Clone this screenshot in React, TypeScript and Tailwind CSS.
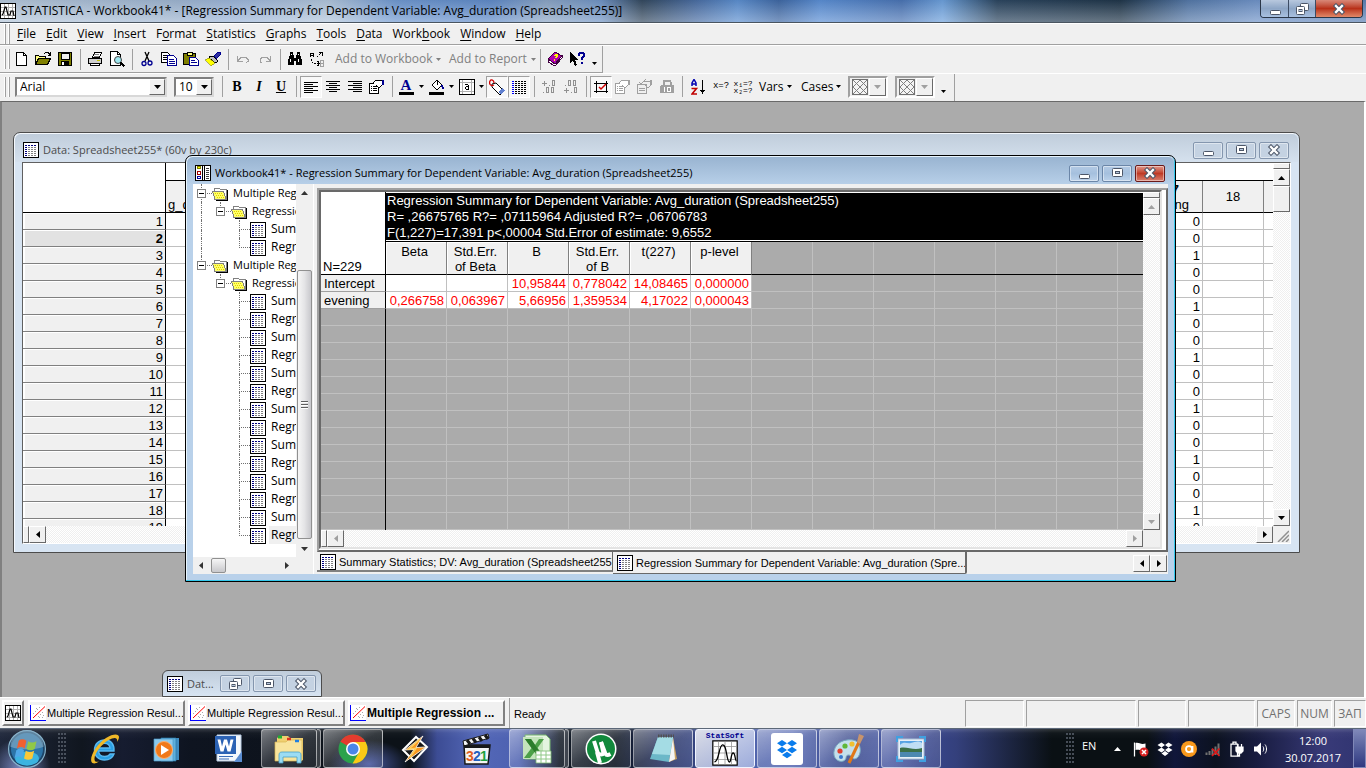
import React from "react";

type Kids = { children?: React.ReactNode };

/* ---------- small shared pieces ---------- */

const uiFont = "font-['Open_Sans','Noto_Sans',sans-serif]";
const cellFont = "font-['Liberation_Sans',Arial,sans-serif]";

function Px({ w = 16, h = 16, children }: Kids & { w?: number; h?: number }) {
  return (
    <svg width={w} height={h} viewBox={`0 0 ${w} ${h}`} fill="none" shapeRendering="crispEdges" className="block shrink-0" aria-hidden="true">
      {children}
    </svg>
  );
}

function SheetIcon() {
  return (
    <Px>
      <rect x="0.5" y="0.5" width="15" height="15" fill="#fff" stroke="#000" />
      <path d="M2 3.5h2M5 3.5h2M8 3.5h2M11 3.5h2M2 5.5h2M2 7.5h2M2 9.5h2M2 11.5h2M2 13.5h2" stroke="#00007f" />
      <path d="M5 5.5h2M8 5.5h2M11 5.5h2M5 7.5h2M8 7.5h2M11 7.5h2M5 9.5h2M8 9.5h2M11 9.5h2M5 11.5h2M8 11.5h2M11 11.5h2M5 13.5h2M8 13.5h2M11 13.5h2" stroke="#808080" />
    </Px>
  );
}

function FolderIcon() {
  return (
    <Px>
      <path d="M2 5V3l1-1h4l1 1h6v10h-1" fill="#fff" stroke="#808080" />
      <path d="M0.5 5.5h11l2.5 8H3z" fill="#ffff66" stroke="#808080" />
      <path d="M3 7h1M5 7h1M7 7h1M9 7h1M4 9h1M6 9h1M8 9h1M10 9h1M5 11h1M7 11h1M9 11h1M11 11h1" stroke="#e0d000" />
      <path d="M15 4v10.5H4" stroke="#000" />
    </Px>
  );
}

function WorkbookIcon() {
  return (
    <Px>
      <rect x="0.5" y="0.5" width="15" height="15" fill="#fff" stroke="#000" />
      <path d="M2 1.500h3v2h-3z" fill="#ffff00" stroke="#808000" />
      <path d="M2.500 6.500h3v3h-3z" stroke="#a00000" />
      <path d="M2.500 11.500h3v2h-3z" stroke="#0000a0" />
      <path d="M7.500 0v16M9.500 0v16" stroke="#000" />
      <path d="M11 3.500h3M11 5.500h3M11 7.500h3M11 9.500h3M11 11.500h3M11 13.500h3" stroke="#404040" />
    </Px>
  );
}

function AppIcon() {
  return (
    <Px>
      <rect x="0.5" y="0.5" width="15" height="15" fill="#fff" stroke="#000" />
      <path d="M4.500 1v14M8.500 1v14M12.500 1v14M1 4.500h14M1 8.500h14M1 12.500h14" stroke="#b0b0b0" />
      <path d="M2 12l1-1 2-7h1l2 8h2l1-4h2l1 5" stroke="#000" shapeRendering="auto" strokeWidth="1.2" />
    </Px>
  );
}

function PlotIcon() {
  return (
    <Px>
      <rect width="16" height="16" fill="#fff" />
      <path d="M0.500 0v15.500H16" stroke="#0000ff" />
      <path d="M3 8h1M5 6h1M7 4h1M9 2h1M4 11h1M8 11h1M10 9h1M12 7h1M6 3h1M13 10h1M9 12h1M12 12h1" stroke="#a8a8a8" />
      <path d="M3 13L15 1.500" stroke="#ff0000" shapeRendering="auto" />
    </Px>
  );
}

const arrows = {
  up: "M0 4h7L3.500 0z",
  down: "M0 0h7L3.500 4z",
};
function Tri({ dir, c = "#000" }: { dir: "up" | "down" | "left" | "right"; c?: string }) {
  if (dir === "up" || dir === "down")
    return (
      <svg width="7" height="4" viewBox="0 0 7 4" className="block shrink-0" aria-hidden="true"><path d={arrows[dir]} fill={c} /></svg>
    );
  return (
    <svg width="4" height="7" viewBox="0 0 4 7" className="block shrink-0" aria-hidden="true"><path d={dir === "left" ? "M4 0v7L0 3.500z" : "M0 0v7L4 3.500z"} fill={c} /></svg>
  );
}
function Caret({ c = "#000" }: { c?: string }) {
  return (
    <svg width="5" height="3" viewBox="0 0 5 3" className="block shrink-0" aria-hidden="true"><path d="M0 0h5L2.500 3z" fill={c} /></svg>
  );
}

const raised = "border border-t-white border-l-white border-r-[#696969] border-b-[#696969] bg-[#f0f0f0]";
const track = "bg-[repeating-conic-gradient(#ffffff_0_25%,#efefef_0_50%)] bg-[length:2px_2px]";

function ScrollBtn({ dir, label, dim }: { dir: "up" | "down" | "left" | "right"; label: string; dim?: boolean }) {
  return (
    <button aria-label={label} className={`flex size-[17px] shrink-0 items-center justify-center ${raised}`}>
      <Tri dir={dir} c={dim ? "#a0a0a0" : "#000"} />
    </button>
  );
}

function Glyph({ kind, s = "#4c5668" }: { kind: "min" | "max" | "close" | "restore"; s?: string }) {
  return (
    <svg width="14" height="12" viewBox="0 0 14 12" fill="none" aria-hidden="true">
      {kind === "min" && <rect x="2.500" y="7.500" width="10" height="4" rx="1" fill="#fff" stroke={s} />}
      {kind === "max" && (
        <>
          <rect x="2.500" y="1.500" width="10" height="8" rx="1" fill="#fff" stroke={s} />
          <rect x="5.500" y="4.500" width="4" height="2" fill="#b7c8de" stroke={s} />
        </>
      )}
      {kind === "restore" && (
        <>
          <rect x="5.500" y="0.500" width="8" height="7" rx="1" fill="#fff" stroke={s} />
          <rect x="1.500" y="3.500" width="8" height="8" rx="1" fill="#fff" stroke={s} />
          <rect x="4" y="6.500" width="3" height="2" fill="#b7c8de" stroke={s} />
        </>
      )}
      {kind === "close" && (
        <>
          <path d="M4 3l6 6M10 3l-6 6" stroke={s} strokeWidth="4.400" strokeLinecap="square" />
          <path d="M4 3l6 6M10 3l-6 6" stroke="#fff" strokeWidth="2.300" strokeLinecap="square" />
        </>
      )}
    </svg>
  );
}

function WinButtons({ active, first = "min" }: { active?: boolean; first?: "min" | "restore" }) {
  const base = "flex h-[17px] w-[30px] items-center justify-center rounded-[2px] border shadow-[inset_0_0_0_1px_#ffffff70]";
  const plain = active ? "border-[#6b86a8] bg-linear-to-b from-[#b3cae4] via-[#a5c0de] via-50% to-[#bcd2ea]" : "border-[#8496ae] bg-[#c4d2e2]";
  const red = active ? "border-[#6a1a1a] bg-linear-to-b from-[#e0988c] via-[#bf3a26] via-50% to-[#d98070]" : "border-[#8496ae] bg-[#c4d2e2]";
  return (
    <div className="ml-auto flex shrink-0 gap-[3px]">
      <button aria-label={first === "min" ? "Minimize" : "Restore"} className={`${base} ${plain}`}><Glyph kind={first} /></button>
      <button aria-label="Maximize" className={`${base} ${plain}`}><Glyph kind="max" /></button>
      <button aria-label="Close" className={`${base} ${red}`}><Glyph kind="close" /></button>
    </div>
  );
}

/* ---------- top bars ---------- */

function TitleBar() {
  return (
    <header className="flex h-[23px] shrink-0 items-start border-b border-[#4a5560] bg-[linear-gradient(to_bottom,#00000010,#ffffff50),linear-gradient(to_right,#b4c6da_0,#9db4d0_13%,#9ab4d8_17%,#b0c4da_24%,#6f98d0_29%,#5f8ac8_36%,#8aa4c4_40%,#6f93c4_44%,#34495f_47%,#4a6ea4_51%,#5c8fd0_54%,#3f68a4_57%,#5a8ed4_60%,#4a74b4_66%,#6ca0dc_69%,#2c4660_73%,#20364a_82%,#5478a8_87%,#6f93c8_92%,#5c80b4_100%)]">
      <div className="flex h-[21px] min-w-0 items-center gap-[5px] pt-px">
        <AppIcon />
        <h1 className="truncate text-[12px] leading-[16px] text-black">STATISTICA - Workbook41* - [Regression Summary for Dependent Variable: Avg_duration (Spreadsheet255)]</h1>
      </div>
      <div className="mr-[3px] ml-auto flex h-[18px] shrink-0 overflow-hidden rounded-b-[4px] border border-t-0 border-[#2a3648]">
        <button aria-label="Minimize" className="flex w-[28px] items-center justify-center border-r border-[#3c4c64] bg-linear-to-b from-[#b8c8de] via-[#8ea6c6] via-50% to-[#a8c0e0]"><Glyph kind="min" /></button>
        <button aria-label="Restore" className="flex w-[27px] items-center justify-center border-r border-[#3c4c64] bg-linear-to-b from-[#b8c8de] via-[#8ea6c6] via-50% to-[#a8c0e0]"><Glyph kind="restore" /></button>
        <button aria-label="Close" className="flex w-[46px] items-center justify-center bg-linear-to-b from-[#d88878] via-[#b83018] via-50% to-[#e08868]"><Glyph kind="close" /></button>
      </div>
    </header>
  );
}

const Grip = () => (
  <span className="ml-[4px] flex h-[20px] shrink-0 gap-[2px]">
    <i className="w-[2px] border-r border-[#a0a0a0] bg-white" />
    <i className="w-[2px] border-r border-[#a0a0a0] bg-white" />
  </span>
);
const Sep = () => (
  <span className="flex w-[8px] shrink-0 justify-center"><i className="h-[21px] w-px bg-[#a0a0a0]" /></span>
);

const menus: [string, string, string][] = [
  ["", "F", "ile"], ["", "E", "dit"], ["", "V", "iew"], ["", "I", "nsert"], ["F", "o", "rmat"], ["", "S", "tatistics"],
  ["", "G", "raphs"], ["", "T", "ools"], ["", "D", "ata"], ["Work", "b", "ook"], ["", "W", "indow"], ["", "H", "elp"],
];

function MenuBar() {
  return (
    <nav className="flex h-[22px] shrink-0 items-center border-t border-b border-t-white border-b-[#a0a0a0]">
      <Grip />
      <ul className="ml-[7px] flex gap-[10px] text-[12px] leading-[16px]">
        {menus.map(([a, u, b]) => (
          <li key={a + u + b}><button>{a}<u className="underline-offset-2">{u}</u>{b}</button></li>
        ))}
      </ul>
    </nav>
  );
}

function Tool({ label, on, children }: Kids & { label: string; on?: boolean }) {
  return (
    <button aria-label={label} title={label} className={`flex h-[22px] w-[22px] shrink-0 items-center justify-center ${on ? "border border-t-[#a0a0a0] border-l-[#a0a0a0] border-r-white border-b-white bg-[#f8f8f8]" : ""}`}>
      {children}
    </button>
  );
}

function StandardBar() {
  return (
    <div className="flex h-[28px] shrink-0 border-t border-white">
      <div role="toolbar" aria-label="Standard" className="flex w-[603px] items-center border-r border-b border-[#a0a0a0]">
        <Grip />
        <Tool label="New"><Px><path d="M3.500 1.500h7l3 3v10h-10z" fill="#fff" stroke="#000" /><path d="M10.500 1.500v3h3" stroke="#000" /></Px></Tool>
        <Tool label="Open"><Px><path d="M0.500 13.500v-9h3l1 1h6v2" fill="#ffff80" stroke="#000" /><path d="M0.500 13.500l3-6h12l-3 6z" fill="#808000" stroke="#000" /><path d="M9 3l2-2h2l2 3M15.500 1v3h-3" stroke="#000" /></Px></Tool>
        <Tool label="Save"><Px><path d="M1.500 1.500h13v13h-13z" fill="#808000" stroke="#000" /><path d="M4 2h8v6H4z" fill="#f0f0f0" stroke="#000" /><path d="M4 10h8v5H4z" fill="#000" /><path d="M5 11h2v3H5z" fill="#fff" /></Px></Tool>
        <Sep />
        <Tool label="Print"><Px><path d="M5.500 6.500l2-5h7l-2 5z" fill="#fff" stroke="#000" /><path d="M7 3.500h5M7 5h5" stroke="#808080" /><path d="M1.500 7.500h13v5h-13z" fill="#d0d0d0" stroke="#000" /><path d="M3.500 12.500h9v2h-9z" fill="#fff" stroke="#000" /><path d="M10 9.500h3" stroke="#c0c000" /></Px></Tool>
        <Tool label="Print preview"><Px><path d="M1.500 0.500h7l3 3v11h-10z" fill="#fff" stroke="#000" /><path d="M8.500 0.500v3h3" stroke="#000" /><circle cx="9" cy="9" r="3.500" fill="#a0e8f0" stroke="#404040" shapeRendering="auto" /><path d="M11.500 11.500l4 4" stroke="#000" strokeWidth="2" /></Px></Tool>
        <Sep />
        <Tool label="Cut"><Px><path d="M6 1l4 9M10 1L6 10" stroke="#000" shapeRendering="auto" strokeWidth="1.300" /><circle cx="5" cy="12.500" r="2" stroke="#000090" shapeRendering="auto" strokeWidth="1.300" /><circle cx="11" cy="12" r="2" stroke="#000090" shapeRendering="auto" strokeWidth="1.300" /></Px></Tool>
        <Tool label="Copy"><Px><path d="M0.500 1.500h6l2 2v8h-8z" fill="#fff" stroke="#000" /><path d="M2 4.500h4M2 6.500h4M2 8.500h4" stroke="#000" /><path d="M6.500 4.500h6l3 3v7h-9z" fill="#fff" stroke="#000090" /><path d="M8 8.500h5M8 10.500h6M8 12.500h6" stroke="#000090" /></Px></Tool>
        <Tool label="Paste"><Px><path d="M0.500 2.500h12v11h-12z" fill="#808000" stroke="#000" /><path d="M4 1h5v3H4z" fill="#ffff80" stroke="#000" /><path d="M6.500 6.500h6l3 3v5h-9z" fill="#fff" stroke="#000090" /><path d="M8 9.500h4M8 11.500h6" stroke="#000090" /></Px></Tool>
        <Tool label="Format painter"><Px><path d="M9 5l4-4h2v3l-4 4z" fill="#3030a0" stroke="#000090" /><path d="M5 5h3l4 4v2l-2 1-6-5z" fill="#c0c0c0" stroke="#000" /><path d="M4 7L0 9l6 6 4-3z" fill="#ffff00" stroke="#808000" strokeWidth="0.600" /></Px></Tool>
        <Sep />
        <Tool label="Undo"><Px><path d="M2.500 5v5h5M3 9.500l3-3h5l2 2v2l-2 1.500" stroke="#a0a0a0" /></Px></Tool>
        <Tool label="Redo"><Px><path d="M13.500 5v5h-5M13 9.500l-3-3H5l-2 2v2L5 12" stroke="#a0a0a0" /></Px></Tool>
        <Sep />
        <Tool label="Find"><Px><path d="M3 1h3v3h1v3h2V4h1V1h3v3l2 5v5H9v-4H7v4H1V9l2-5z" fill="#000" /><path d="M3 8v3M11 8v3M4 3v1M11 3v1" stroke="#fff" /></Px></Tool>
        <Tool label="Replace"><Px><path d="M1.500 6V3l1-1h1l1 1v3M1.500 4.500h3" stroke="#000" /><path d="M8 6l1-1M10 4l2-2M10 1.500h3.500v3M2.500 8v2M3.500 11v1M5 12.500h2M8 12.500h2M8.500 10l2 2.500-2 2.500" stroke="#000" /><path d="M11.500 9v6h3V9zM12 12h2" stroke="#a0a0a0" /></Px></Tool>
        <button disabled className="ml-[7px] flex w-[106px] shrink-0 items-center justify-between text-[12px] leading-[16px] whitespace-nowrap text-[#808080]">Add to Workbook<Caret c="#808080" /></button>
        <button disabled className="ml-[8px] flex w-[87px] shrink-0 items-center justify-between text-[12px] leading-[16px] whitespace-nowrap text-[#808080]">Add to Report<Caret c="#808080" /></button>
        <Sep />
        <Tool label="Help book"><Px><path d="M1 8l7-7 7 4-7 8z" fill="#b000b0" stroke="#400040" /><path d="M1 8v3l7 4 7-8V5l-7 8z" fill="#fff" stroke="#400040" /><path d="M7 5l1-1h2v2L8 7M7 9h1" stroke="#ffff00" strokeWidth="1.300" /></Px></Tool>
        <Tool label="What is this"><Px><path d="M1 1v11l3-3 2 6 2-1-2-5h4z" fill="#000" /><path d="M10 5V3l1-1.500h2.500L15 3v2l-2 2v2M13 11v2" stroke="#000090" strokeWidth="2" /></Px></Tool>
        <button aria-label="Toolbar options" className="mt-[9px] ml-[4px]"><Caret /></button>
      </div>
    </div>
  );
}

function Combo({ label, value, width }: { label: string; value: string; width: string }) {
  return (
    <span className={`flex h-[20px] shrink-0 border-2 border-t-[#808080] border-l-[#808080] border-r-[#d8d8d8] border-b-[#d8d8d8] bg-white ${width}`}>
      <select aria-label={label} defaultValue={value} className="min-w-0 flex-1 appearance-none bg-white pl-[3px] text-[12px] leading-[16px] outline-none">
        <option>{value}</option>
      </select>
      <i className={`flex w-[16px] items-center justify-center ${raised}`}><Tri dir="down" /></i>
    </span>
  );
}
function PatternCombo({ label }: { label: string }) {
  return (
    <button disabled aria-label={label} className="flex h-[22px] w-[40px] shrink-0 items-center justify-between border-2 border-[#a0a0a0] border-r-white border-b-white pl-[2px]">
      <Px><rect x="0.500" y="0.500" width="15" height="15" stroke="#707070" fill="#f4f4f4" /><path d="M1 1l14 14M15 1L1 15M8 1l7 7-7 7-7-7z" stroke="#808080" /></Px>
      <i className={`flex h-[18px] w-[17px] items-center justify-center ${raised}`}><Tri dir="down" c="#a0a0a0" /></i>
    </button>
  );
}
const Lines = ({ d }: { d: string }) => <Px><path d={d} stroke="#000" /></Px>;

function FormatBar() {
  const props = (c: string, b: string) => (
    <Px><path d="M0.500 4.500h9v10h-9z" fill="#fff" stroke={c} /><path d="M2 7.500h1M4 7.500h4M2 9.500h1M4 9.500h4M2 11.500h1M4 11.500h4" stroke={c} /><path d="M4 4l3-3h6v5l-3 3-3-3" fill="#fff" stroke={c} /><path d="M14 1v5" stroke={b} strokeWidth="2" /></Px>
  );
  return (
    <div className="flex h-[28px] shrink-0 border-t border-white">
      <div role="toolbar" aria-label="Formatting" className="flex w-[955px] items-center border-r border-[#a0a0a0] pb-[2px]">
        <Grip />
        <div className="ml-[5px] flex w-[203px] shrink-0 gap-[7px]">
          <Combo label="Font" value="Arial" width="w-[152px]" />
          <Combo label="Font size" value="10" width="w-[40px]" />
        </div>
        <Sep />
        <Tool label="Bold"><b className="font-['Liberation_Serif',serif] text-[14px] leading-none">B</b></Tool>
        <Tool label="Italic"><b className="font-['Liberation_Serif',serif] text-[14px] leading-none italic">I</b></Tool>
        <Tool label="Underline"><b className="font-['Liberation_Serif',serif] text-[14px] leading-none underline">U</b></Tool>
        <Sep />
        <Tool label="Align left" on><Lines d="M1 3.500h14M1 5.500h9M1 7.500h14M1 9.500h9M1 11.500h14M1 13.500h9" /></Tool>
        <Tool label="Align center"><Lines d="M1 2.500h14M4 4.500h8M1 6.500h14M4 8.500h8M1 10.500h14M4 12.500h8" /></Tool>
        <Tool label="Align right"><Lines d="M1 2.500h14M6 4.500h9M1 6.500h14M6 8.500h9M1 10.500h14M6 12.500h9" /></Tool>
        <Tool label="Cell format">{props("#000", "#000090")}</Tool>
        <Sep />
        <button aria-label="Font color" className="flex h-[22px] w-[30px] shrink-0 items-center justify-center gap-[5px]"><span className="flex w-[15px] flex-col items-center border-b-[3px] border-black font-['Liberation_Serif',serif] text-[15px] leading-[13px] font-bold text-[#000090]">A</span><Caret /></button>
        <button aria-label="Fill color" className="flex h-[22px] w-[30px] shrink-0 items-center justify-center gap-[4px]"><Px><path d="M3 6l5-5 5 5-5 5z" fill="#fff" stroke="#000" /><path d="M8 1v5" stroke="#000" /><path d="M13 6l1 4" stroke="#000090" strokeWidth="2" /><path d="M0 13h15v3H0z" fill="#000" /></Px><Caret /></button>
        <button aria-label="Borders" className="flex h-[22px] w-[30px] shrink-0 items-center justify-center gap-[4px]"><Px><path d="M0.500 0.500h15v15h-15z" fill="#fff" stroke="#000" /><path d="M3.500 1v14M12.500 1v14M1 3.500h14M1 12.500h14" stroke="#b0b0b0" /><path d="M6 5.500h3M9.500 6v4.500M7 7.500h3M6.500 8v2M7 10.500h3" stroke="#000" /></Px><Caret /></button>
        <Tool label="Labels" on><Px><path d="M3 5l4-1 8 8-4 4-8-8z" fill="#fff" stroke="#000" shapeRendering="auto" /><path d="M9 13l4-4 2.500 2.500-4 4z" fill="#6080d0" /><path d="M5 6c-4 2-5-2-4-4s4-1 4 2" stroke="#d00000" shapeRendering="auto" strokeWidth="1.300" /></Px></Tool>
        <Tool label="Gridlines" on><Px><path d="M1 2.500h2M1 4.500h2M1 6.500h2M1 8.500h2M1 10.500h2M1 12.500h2M1 14.500h2" stroke="#0000ff" strokeWidth="1" /><path d="M4 2.500h11M4 4.500h11M4 6.500h11M4 8.500h11M4 10.500h11M4 12.500h11M4 14.500h11" stroke="#000" strokeDasharray="2 1" /></Px></Tool>
        <Sep />
        <Tool label="Increase decimals"><Px><path d="M1 4.500h5M3.500 2v5M8 6.500h1M2 13.500h1" stroke="#909090" /><path d="M11.500 1.500h2v5h-2zM5.500 8.500h2v5h-2zM10.500 8.500h2v5h-2z" stroke="#909090" /></Px></Tool>
        <Tool label="Decrease decimals"><Px><path d="M1 11.500h5M3.500 9v5M8 13.500h1M2 6.500h1" stroke="#909090" /><path d="M5.500 1.500h2v5h-2zM10.500 1.500h2v5h-2zM11.500 8.500h2v5h-2z" stroke="#909090" /></Px></Tool>
        <Sep />
        <Tool label="Mark cells" on><Px><path d="M1 4.500h14M1 12.500h14M3.500 2v12M13.500 2v12" stroke="#000" /><path d="M6 8l2 2 5-5" stroke="#d00000" strokeWidth="1.500" shapeRendering="auto" /></Px></Tool>
        <Tool label="Case states">{props("#a0a0a0", "#a0a0a0")}</Tool>
        <Tool label="Selection conditions"><Px><path d="M0.500 5.500h9v9h-9z" stroke="#a0a0a0" /><path d="M2 3l2 2 5-5M2 9.500h6M2 11.500h6M7 2h7v4l-3 3-3-3" stroke="#a0a0a0" /><path d="M14 1v5" stroke="#a0a0a0" strokeWidth="2" /></Px></Tool>
        <Tool label="Weight"><Px><path d="M4.500 6V3l1-1.500h5l1 1.500v3" stroke="#a0a0a0" strokeWidth="2" /><path d="M1 7l1-1h12l1 1v7H1z" fill="#a0a0a0" /><path d="M5.500 8v5M8.500 8.500h3v4h-3z" stroke="#fff" /></Px></Tool>
        <Sep />
        <i className="w-[2px]" />
        <Tool label="Sort"><Px><path d="M1 7V4l2-3.500L5 4v3M1 5h4" stroke="#0000b0" strokeWidth="1.500" shapeRendering="auto" /><path d="M0.500 9.500h5l-4.500 5.500h5" stroke="#c00000" strokeWidth="1.600" shapeRendering="auto" /><path d="M11.500 1v14" stroke="#000" /><path d="M9 11h5l-2.500 4z" fill="#000" /></Px></Tool>
        <Tool label="Recalculate variable"><span className="font-['Liberation_Mono',monospace] text-[9px] leading-none">x=?</span></Tool>
        <Tool label="Recalculate all"><span className="flex flex-col font-['Liberation_Mono',monospace] text-[8px] leading-[7px]"><span>x₁=?</span><span>x₂=?</span></span></Tool>
        <button className="ml-[5px] flex w-[33px] items-center justify-between text-[12px] leading-[16px]">Vars<Caret /></button>
        <button className="mr-[7px] ml-[9px] flex w-[40px] items-center justify-between text-[12px] leading-[16px]">Cases<Caret /></button>
        <div className="flex gap-[7px]">
          <PatternCombo label="Pattern one" />
          <PatternCombo label="Pattern two" />
        </div>
        <button aria-label="Toolbar options" className="mt-[9px] ml-[6px]"><Caret /></button>
      </div>
    </div>
  );
}

/* ---------- background data window ---------- */

const blanks = Array.from({ length: 16 }, (_, i) => i);

function DataWindow() {
  const cell = "h-[17px] border-r border-b border-[#c0c0c0] p-0";
  return (
    <section aria-label="Data spreadsheet" className="absolute top-[30px] left-[11px] flex h-[421px] w-[1287px] flex-col rounded-t-[7px] border border-[#4c4c4c] bg-[#d7e4f2] px-[8px] pb-[8px] shadow-[inset_1px_1px_0_#f4f8fc]">
      <div className="-mx-[7px] mt-px flex h-[28px] shrink-0 items-center gap-[4px] rounded-t-[6px] bg-linear-to-b from-[#c0cddb] to-[#d5e1ee] pt-[4px] pr-[9px] pl-[8px]">
        <SheetIcon />
        <h2 className="text-[11px] leading-[16px] text-[#4c4c4c]">Data: Spreadsheet255* (60v by 230c)</h2>
        <WinButtons />
      </div>
      <div className={`flex min-h-0 flex-1 flex-col border border-[#606060] border-r-white border-b-white bg-[#f0f0f0] ${cellFont} text-[13px] leading-[15px]`}>
        <div className="flex min-h-0 flex-1">
          <div className="min-w-0 flex-1 overflow-hidden bg-white">
            <table className="w-full table-fixed border-separate border-spacing-0">
              <colgroup>
                <col className="w-[143px]" />
                {blanks.map((b) => <col key={b} className="w-[61px]" />)}
                <col className="w-[61px]" /><col className="w-[61px]" /><col />
              </colgroup>
              <thead>
                <tr>
                  <td rowSpan={2} className="border-r border-b border-black p-0" />
                  <td colSpan={19} className="h-[18px] border-b border-black p-0" />
                </tr>
                <tr>
                  <th className="h-[32px] border-r border-b border-r-[#808080] border-b-black bg-[#f0f0f0] p-0 pl-[2px] text-left align-bottom font-normal">g_dur</th>
                  {blanks.slice(1).map((b) => <th key={b} className="border-r border-b border-r-[#808080] border-b-black bg-[#f0f0f0] p-0" />)}
                  <th className="border-r border-b border-r-[#808080] border-b-black bg-[#f0f0f0] p-0 pr-[13px] text-right font-normal whitespace-nowrap"><b className="pr-[10px]">17</b><br />evening</th>
                  <th className="border-r border-b border-r-[#808080] border-b-black bg-[#f0f0f0] p-0 font-normal">18</th>
                  <th className="border-b border-black bg-[#f0f0f0] p-0" />
                </tr>
              </thead>
              <tbody>
                {Array.from({ length: 19 }, (_, i) => i + 1).map((n) => (
                  <tr key={n}>
                    <th className={`h-[17px] border-r border-b border-r-black border-b-[#808080] p-0 pt-px pr-[2px] text-right shadow-[inset_2px_1px_0_#fff] ${n === 2 ? "bg-[#e2e2e2] font-bold" : "bg-[#f0f0f0] font-normal"}`}>{n}</th>
                    {blanks.map((b) => <td key={b} className={cell} />)}
                    <td className={`${cell} pt-px pr-[2px] text-right`}>{n % 3 === 0 && n < 19 ? 1 : 0}</td>
                    <td className={cell} />
                    <td className="border-b border-[#c0c0c0] p-0" />
                  </tr>
                ))}
              </tbody>
            </table>
          </div>
          <div className={`flex w-[17px] flex-col ${track}`}>
            <i className={`h-[6px] ${raised}`} />
            <ScrollBtn dir="up" label="Scroll up" />
            <i className={`h-[26px] ${raised}`} />
            <span className="mt-auto"><ScrollBtn dir="down" label="Scroll down" /></span>
          </div>
        </div>
        <div className="flex h-[17px] shrink-0">
          <div className={`flex flex-1 ${track}`}>
            <i className={`w-[6px] ${raised}`} />
            <ScrollBtn dir="left" label="Scroll left" />
            <span className="ml-auto"><ScrollBtn dir="right" label="Scroll right" /></span>
          </div>
          <div className="flex w-[17px] items-end justify-end p-px">
            <Px w={12} h={12}><path d="M1 12L12 1M5 12l7-7M9 12l3-3" stroke="#909090" strokeWidth="1.500" shapeRendering="auto" /></Px>
          </div>
        </div>
      </div>
    </section>
  );
}

/* ---------- workbook window ---------- */

type Node = { level: 1 | 2 | 3; label: string; root: boolean; last?: boolean };
const tree: Node[] = [
  { level: 1, label: "Multiple Regression", root: true },
  { level: 2, label: "Regression results", root: true },
  { level: 3, label: "Summary", root: true },
  { level: 3, label: "Regression", root: true, last: true },
  { level: 1, label: "Multiple Regression", root: false },
  { level: 2, label: "Regression results", root: false },
  ...Array.from({ length: 14 }, (_, i): Node => ({ level: 3, label: i % 2 ? "Regression" : "Summary", root: false, last: i === 13 })),
];

function Branch({ top, bottom, arm, box }: { top?: boolean; bottom?: boolean; arm?: boolean; box?: boolean }) {
  return (
    <span className="relative flex w-[19px] shrink-0 pl-[8px]">
      <span className="flex flex-1 flex-col">
        <i className={`h-[10px] border-dotted border-[#707070] ${top ? "border-l" : ""} ${arm ? "border-b" : ""}`} />
        <i className={`h-[8px] border-dotted border-[#707070] ${bottom ? "border-l" : ""}`} />
      </span>
      {box && (
        <button aria-label="Collapse" className="absolute top-[5px] left-[4px] flex size-[9px] items-center justify-center border border-[#808080] bg-white"><i className="h-px w-[5px] bg-black" /></button>
      )}
    </span>
  );
}

function TreePane() {
  return (
    <aside aria-label="Workbook tree" className="flex w-[120px] shrink-0 flex-col bg-white">
      <div className="flex min-h-0 flex-1">
        <ul className="w-[103px] overflow-hidden text-[12px] leading-[18px]">
          {tree.map((n, i) => (
            <li key={i} className="flex h-[18px] whitespace-nowrap">
              {n.level === 1 && <Branch top bottom={n.root} arm box />}
              {n.level > 1 && <Branch top={n.root} bottom={n.root} />}
              {n.level === 2 && <Branch top arm box />}
              {n.level === 3 && (<><Branch /><Branch top bottom={!n.last} arm /></>)}
              <span className="mr-[3px] flex items-center pt-px">{n.level === 3 ? <SheetIcon /> : <FolderIcon />}</span>
              <span className={`flex-1 pl-[2px] ${n.level === 3 ? "" : "text-[11px]"} ${i === tree.length - 1 ? "bg-[#f0f0f0]" : ""}`}>{n.label}</span>
            </li>
          ))}
        </ul>
        <div className="flex w-[17px] flex-col items-center bg-[#f0f0f0]">
          <button aria-label="Scroll tree up" className="flex h-[17px] items-center"><Tri dir="up" c="#333" /></button>
          <i className="mt-[69px] flex h-[269px] w-[15px] flex-col items-center justify-center gap-px rounded-[2px] border border-[#909090] bg-linear-to-r from-[#f6f6f6] via-[#e4e4e6] to-[#c8c8cc]">
            <i className="h-[2px] w-[7px] border-b border-[#fff] bg-[#606060]" />
            <i className="h-[2px] w-[7px] border-b border-[#fff] bg-[#606060]" />
            <i className="h-[2px] w-[7px] border-b border-[#fff] bg-[#606060]" />
          </i>
          <button aria-label="Scroll tree down" className="mt-auto flex h-[17px] items-center"><Tri dir="down" c="#333" /></button>
        </div>
      </div>
      <div className="flex h-[17px] shrink-0 bg-[#f0f0f0]">
        <div className="flex w-[103px] items-center pr-[7px] pl-[6px]">
          <button aria-label="Scroll tree left"><Tri dir="left" c="#333" /></button>
          <i className="ml-[8px] h-[15px] w-[15px] rounded-[2px] border border-[#909090] bg-linear-to-b from-[#f6f6f6] to-[#c8c8cc]" />
          <button aria-label="Scroll tree right" className="ml-auto"><Tri dir="right" c="#333" /></button>
        </div>
      </div>
    </aside>
  );
}

const heads = ["Beta", "Std.Err.\nof Beta", "B", "Std.Err.\nof B", "t(227)", "p-level"];
const results: [string, string[]][] = [
  ["Intercept", ["", "", "10,95844", "0,778042", "14,08465", "0,000000"]],
  ["evening", ["0,266758", "0,063967", "5,66956", "1,359534", "4,17022", "0,000043"]],
];

function ResultSheet() {
  return (
    <div className={`flex min-w-0 flex-1 flex-col overflow-hidden bg-[#ababab] ${cellFont} text-[13px] leading-[15px]`}>
      <table className="w-full table-fixed border-separate border-spacing-0">
        <colgroup>
          <col className="w-[65px]" />
          {heads.map((h) => <col key={h} className="w-[61px]" />)}
          <col />
        </colgroup>
        <thead>
          <tr>
            <td rowSpan={2} className="border-r border-b border-black bg-white p-0 pl-[2px] align-bottom">N=229</td>
            <th colSpan={7} className="h-[50px] border-b border-black bg-white p-0 py-px text-left leading-[16px] font-normal text-white">
              <div className="h-[47px] bg-black pl-px whitespace-nowrap">
                Regression Summary for Dependent Variable: Avg_duration (Spreadsheet255)<br />
                R= ,26675765 R?= ,07115964 Adjusted R?= ,06706783<br />
                F(1,227)=17,391 p&lt;,00004 Std.Error of estimate: 9,6552
              </div>
            </th>
          </tr>
          <tr>
            {heads.map((h) => (
              <th key={h} className="h-[33px] border-r border-b border-r-[#808080] border-b-black bg-[#f0f0f0] p-0 pt-[2px] pr-[3px] align-top font-normal whitespace-pre-line shadow-[inset_1px_1px_0_#fff]">{h}</th>
            ))}
            <td className="border-b border-black bg-[repeating-linear-gradient(to_right,transparent_0,transparent_60px,#c0c0c0_60px,#c0c0c0_61px)] p-0" />
          </tr>
        </thead>
        <tbody>
          {results.map(([name, vals]) => (
            <tr key={name}>
              <th className="h-[17px] border-r border-b border-r-black border-b-[#a0a0a0] bg-[#f0f0f0] p-0 pt-px pl-[3px] text-left font-normal">{name}</th>
              {vals.map((v, i) => <td key={i} className="border-r border-b border-[#c0c0c0] bg-white p-0 pt-px pr-[2px] text-right text-[#ff0000]">{v}</td>)}
              <td className="border-b border-[#c0c0c0] bg-[repeating-linear-gradient(to_right,transparent_0,transparent_60px,#c0c0c0_60px,#c0c0c0_61px)] p-0" />
            </tr>
          ))}
        </tbody>
      </table>
      <div className="flex min-h-0 flex-1 bg-[repeating-linear-gradient(to_bottom,transparent_0,transparent_16px,#c0c0c0_16px,#c0c0c0_17px)]">
        <div className="w-[65px] shrink-0 border-r border-black" />
        <div className="flex-1 bg-[repeating-linear-gradient(to_right,transparent_0,transparent_60px,#c0c0c0_60px,#c0c0c0_61px)]" />
      </div>
    </div>
  );
}

function WorkbookWindow() {
  return (
    <section aria-label="Workbook" className="absolute top-[53px] left-[183px] flex h-[427px] w-[991px] flex-col rounded-t-[7px] border border-black bg-[#b9d1ea] px-[7px] pb-[7px] shadow-[inset_-1px_-1px_0_#34c8ec,inset_1px_1px_0_#e8f4fc]">
      <div className="-mx-[6px] mt-px flex h-[27px] shrink-0 items-center gap-[4px] rounded-t-[6px] bg-linear-to-b from-[#99b4d1] to-[#b7cfe8] pt-[5px] pr-[9px] pl-[8px]">
        <WorkbookIcon />
        <h2 className="text-[11px] leading-[16px] text-black">Workbook41* - Regression Summary for Dependent Variable: Avg_duration (Spreadsheet255)</h2>
        <WinButtons active />
      </div>
      <div className="flex min-h-0 flex-1 bg-[#f0f0f0]">
        <TreePane />
        <div className="flex min-w-0 flex-1 flex-col border-l border-white pt-[4px] pl-[3px]">
          <div className="flex min-h-0 flex-1 border-2 border-t-[#a0a0a0] border-l-[#a0a0a0] border-r-[#696969] border-b-[#696969] bg-white pr-[4px] pb-px">
            <div className="flex min-w-0 flex-1 flex-col border-2 border-t-[#696969] border-l-[#696969] border-r-[#e3e3e3] border-b-[#e3e3e3]">
              <div className="flex min-h-0 flex-1">
                <ResultSheet />
                <div className={`flex w-[17px] flex-col ${track}`}>
                  <i className={`h-[6px] ${raised}`} />
                  <ScrollBtn dir="up" label="Scroll results up" dim />
                  <span className="mt-auto"><ScrollBtn dir="down" label="Scroll results down" dim /></span>
                </div>
              </div>
              <div className="flex h-[17px] shrink-0">
                <div className={`flex flex-1 ${track}`}>
                  <i className={`w-[6px] ${raised}`} />
                  <ScrollBtn dir="left" label="Scroll results left" dim />
                  <span className="ml-auto"><ScrollBtn dir="right" label="Scroll results right" dim /></span>
                </div>
                <i className="w-[17px] bg-[#f0f0f0]" />
              </div>
            </div>
          </div>
          <div role="tablist" aria-label="Workbook items" className={`flex h-[22px] shrink-0 items-start pr-px ${cellFont} text-[11px] leading-[16px]`}>
            <button role="tab" aria-selected="false" className="flex h-[20px] w-[296px] items-center gap-[3px] overflow-hidden border-r border-b-2 border-r-[#696969] border-b-[#808080] pt-px pl-[3px] whitespace-nowrap"><SheetIcon />Summary Statistics; DV: Avg_duration (Spreadsheet255)</button>
            <button role="tab" aria-selected="true" className="flex h-[22px] w-[354px] items-center gap-[3px] overflow-hidden rounded-br-[2px] border-r-2 border-b border-[#696969] pt-px pl-[4px] whitespace-nowrap"><SheetIcon />Regression Summary for Dependent Variable: Avg_duration (Spre...</button>
            <span className="mt-[3px] ml-auto flex">
              <ScrollBtn dir="left" label="Previous tabs" />
              <ScrollBtn dir="right" label="Next tabs" />
            </span>
          </div>
        </div>
      </div>
    </section>
  );
}

function MinimizedWindow() {
  return (
    <section aria-label="Minimized data" className="absolute bottom-0 left-[160px] flex h-[27px] w-[160px] items-center gap-[4px] rounded-t-[6px] border border-[#4c4c4c] bg-linear-to-b from-[#c0cddb] to-[#d7e4f2] pr-[5px] pl-[4px]">
      <SheetIcon />
      <h2 className="text-[11px] leading-[16px] text-[#4c4c4c]">Dat...</h2>
      <WinButtons first="restore" />
    </section>
  );
}

/* ---------- status bar ---------- */

function StatusBar() {
  const btn = "flex h-[26px] w-[157px] shrink-0 items-center gap-px overflow-hidden border-2 border-t-white border-l-white border-r-[#808080] border-b-[#808080] whitespace-nowrap";
  const pane = "h-[27px] border border-t-[#a0a0a0] border-l-[#a0a0a0] border-r-white border-b-white";
  return (
    <footer className={`flex h-[31px] shrink-0 items-center border-t border-white ${cellFont} text-[11px] leading-[16px]`}>
      <button aria-label="STATISTICA start" className="ml-[2px] flex h-[26px] w-[22px] items-center justify-center border-2 border-t-white border-l-white border-r-[#808080] border-b-[#808080]"><AppIcon /></button>
      <div className="ml-[4px] flex gap-[3px]">
        <button className={btn}><PlotIcon />Multiple Regression Resul...</button>
        <button className={btn}><PlotIcon />Multiple Regression Resul...</button>
        <button className={`${btn} text-[12px] font-bold`}><PlotIcon />Multiple Regression ...</button>
      </div>
      <i className="ml-[4px] h-[30px] w-px bg-[#a0a0a0]" />
      <p className="flex-1 pt-px pl-[4px]">Ready</p>
      <div className={`flex gap-[2px] ${uiFont} text-[12px] leading-[26px] text-[#707070]`}>
        <i className={`${pane} w-[59px]`} />
        <i className={`${pane} w-[110px]`} />
        <i className={`${pane} w-[48px]`} />
        <i className={`${pane} w-[67px]`} />
        <span className={`${pane} w-[38px] text-center`}>CAPS</span>
        <span className={`${pane} w-[35px] text-center`}>NUM</span>
        <span className={`${pane} w-[32px] text-center`}>ЗАП</span>
      </div>
    </footer>
  );
}

/* ---------- taskbar ---------- */

function Ico({ children, w = 32, h = 32 }: Kids & { w?: number; h?: number }) {
  return <svg width={w} height={h} viewBox="0 0 32 32" fill="none" className="block shrink-0" aria-hidden="true">{children}</svg>;
}

const taskIcons: { name: string; open?: boolean; active?: boolean; stack?: boolean; icon: React.ReactNode }[] = [
  {
    name: "Internet Explorer",
    icon: <Ico><path d="M25 18H9.500c.3 3.500 3 5.500 6.300 5.500 2.500 0 4.300-1 5.200-2.500h4c-1.500 4-5 6-9.500 6C9.500 27 5.500 23 5.500 17S9.800 7 15.800 7C22 7 25.500 11.500 25 18zM9.800 15H21c-.4-3-2.500-4.600-5.300-4.600S10.400 12 9.800 15z" fill="#2ba0e4" stroke="#58b8f0" strokeWidth="1.400" /><path d="M3.500 30C-1 27 6 12 17 5c7-4.500 13-4.500 13-1 0 1.500-1 3.500-2 5 .8-3.500-1-5-5-3.500C13 9 3 23 6 28c.8 1 2 1 4 .5-2.500 1.700-4.800 2.500-6.500 1.500z" fill="#f0b828" /></Ico>,
  },
  {
    name: "Media Player",
    icon: <Ico><path d="M14 5h14v22H14z" fill="#3f8cc0" /><path d="M10 5h15v23H10z" fill="#5fb0dc" stroke="#2c78a8" strokeWidth=".7" /><path d="M3 6h19v22H3z" fill="#8ccaec" stroke="#4a98c8" strokeWidth=".7" /><circle cx="13" cy="17" r="8.500" fill="#f07818" stroke="#fbb070" /><path d="M10 12l8 5-8 5z" fill="#fff" /></Ico>,
  },
  {
    name: "Word",
    icon: <Ico><path d="M4 2h24v26H4z" fill="#f4f8fc" stroke="#b8cce4" /><path d="M2 3h21v18H2z" fill="#2b62b4" /><path d="M4.500 6.500l3 12h3l2-7 2 7h3l3-12h-3l-1.500 7-2-7h-3l-2 7-1.500-7z" fill="#fff" /><path d="M6 23.500h14M6 26h10" stroke="#3a6cb8" /><path d="M21 29h8V18z" fill="#5a8cd0" /></Ico>,
  },
  {
    name: "Explorer", open: true, stack: true,
    icon: <Ico><path d="M4 5l3-2h8l2 2h13v22H4z" fill="#f0d070" /><path d="M2 9h11l2-2h14v21H2z" fill="#f8e49c" stroke="#d8b450" strokeWidth=".7" /><path d="M5 4h4" stroke="#20b030" strokeWidth="3" /><path d="M14 6h4" stroke="#e03020" strokeWidth="2.500" /><path d="M22 8h4" stroke="#2080e0" strokeWidth="2.500" /><path d="M6 30v-8c0-2 1-3 3-3h16c2 0 3 1 3 3v8h-4v-6H10v6z" fill="#9cdcf4" stroke="#48a0c8" strokeWidth=".8" /></Ico>,
  },
  {
    name: "Chrome", open: true,
    icon: <Ico><circle cx="16" cy="16" r="14.500" fill="#2ba24c" /><path d="M16 16L3.400 8.800A14.500 14.500 0 0 1 28.600 9z" fill="#e33b2e" /><path d="M16 9h12.600a14.500 14.500 0 0 1-13 21.500L22 19.500z" fill="#fbc916" /><circle cx="16" cy="16" r="7" fill="#fff" /><circle cx="16" cy="16" r="5.500" fill="#4a86e8" /></Ico>,
  },
  {
    name: "Winamp",
    icon: <Ico><path d="M4 17L17 4l11 10-13 14z" fill="#181818" stroke="#fff" strokeWidth="2" /><path d="M24 3L6 17l9-.5L6 29l21-15-10 .5z" fill="#f89820" stroke="#fff" strokeWidth=".8" /><path d="M21 6L10 16l7-.7-6 9" stroke="#fcd060" strokeWidth="1.500" /></Ico>,
  },
  {
    name: "Media Player Classic",
    icon: <Ico><path d="M3 12h26l-2 19H4z" fill="#f4f4f4" stroke="#181818" strokeWidth="1.500" /><path d="M2 8L27 1l1 4L3 13z" fill="#f4f4f4" stroke="#181818" /><path d="M6 7l3 4M12 5.500l3 4M18 4l3 4M24 2l3 4" stroke="#181818" strokeWidth="3" /><path d="M3 12h26v3H3z" fill="#181818" /><text x="5" y="28" fontSize="14" fontWeight="bold" fontFamily="Liberation Sans" fill="#e06020">3</text><text x="12" y="28" fontSize="14" fontWeight="bold" fontFamily="Liberation Sans" fill="#2060c0">2</text><text x="19" y="28" fontSize="14" fontWeight="bold" fontFamily="Liberation Sans" fill="#20a040">1</text></Ico>,
  },
  {
    name: "Excel", open: true, stack: true,
    icon: <Ico><path d="M4 2h21l4 4v20H4z" fill="#e4f4e0" stroke="#78b870" /><path d="M2 4h20v22H2z" fill="#c4e4bc" /><path d="M4 6h6l4 6 4-6h5l-6.500 9L24 25h-6l-4-6.500L9 25H3l7.500-10z" fill="#4ca048" /><path d="M4 6h6l13 19h-5z" fill="#2c7c2c" /><path d="M15 18h15v12H15z" fill="#fff" stroke="#78b870" strokeWidth=".8" /><path d="M15 22h15M15 26h15M20 18v12M25 18v12" stroke="#90c888" /></Ico>,
  },
  {
    name: "uTorrent", open: true,
    icon: <Ico><circle cx="16" cy="16" r="15.500" fill="#fff" /><circle cx="16" cy="16" r="14" fill="#12893c" /><path d="M9 8l3.500 11c1 3 5 3 6 1L16 9" stroke="#fff" strokeWidth="4" /><path d="M16 9l4.500 12c1 1.500 3 1 5 0M12 19l3 11" stroke="#fff" strokeWidth="4" /></Ico>,
  },
  {
    name: "Notepad", open: true,
    icon: <Ico><path d="M26 4l4 22-8 3z" fill="#c8a060" /><path d="M11 4h15l-4 25L3 26z" fill="#6cb8c8" /><path d="M11 4h15l-3 18L5 21z" fill="#a4dce4" /><path d="M22 29l6-3-2-21z" fill="#f4f4f4" /><path d="M11 3h16" stroke="#505050" strokeWidth="3" strokeDasharray="1.500 1" /></Ico>,
  },
  {
    name: "STATISTICA", open: true, active: true,
    icon: (
      <span className="flex flex-col items-center"><span className="font-['Liberation_Mono',monospace] text-[8px] leading-[8px] font-bold text-[#000090]">StatSoft</span><Ico w={26} h={26}><path d="M1 1h30v30H1z" fill="#fff" stroke="#000" strokeWidth="1.500" /><path d="M8 2v28M16 2v28M24 2v28M2 8h28M2 16h28M2 24h28" stroke="#989898" /><path d="M3 27c6 0 5-20 10-21s5 20 8 21 2-11 5-11 2 9 4 10" stroke="#000" strokeWidth="1.600" /></Ico></span>
    ),
  },
  {
    name: "Dropbox", open: true,
    icon: <Ico><rect width="32" height="32" rx="3" fill="#fff" /><path d="M11 7l5 3.300-5 3.300-5-3.300zM21 7l5 3.300-5 3.300-5-3.300zM11 13.700l5 3.300-5 3.300L6 17zM21 13.700l5 3.300-5 3.300-5-3.300zM16 18.800l5 3.200-5 3.300-5-3.300z" fill="#0a7cec" /></Ico>,
  },
  {
    name: "Paint", open: true,
    icon: <Ico><path d="M14 7C5 8 0 15 1 22c1 6 8 8 11 5 2-2 0-5 4-5 4 1 3 6 8 3 5-4 4-14-1-17-2-1-6-1.500-9-1z" fill="#c4e0ec" stroke="#78a8c0" /><circle cx="7" cy="18" r="2.600" fill="#e04030" /><circle cx="12" cy="13" r="2.600" fill="#60b838" /><circle cx="19" cy="11" r="2.600" fill="#f0c030" /><circle cx="8" cy="24" r="2" fill="#3878d0" /><path d="M16 30L26 9" stroke="#e07818" strokeWidth="3" /><path d="M24 9l2-8 5 2-4 8z" fill="#c8946c" /></Ico>,
  },
  {
    name: "Pictures", open: true,
    icon: <Ico><path d="M3 6h26v20H3z" fill="#e8f0f8" stroke="#a8c0d8" /><path d="M5 8h22v8H5z" fill="#58a4e4" /><path d="M5 12c4-4 7-1 11-2s7-3 11 0v8H5z" fill="#c0def4" /><path d="M5 15c7-2 13 3 22 0v5H5z" fill="#3c7048" /><path d="M5 19h22v5H5z" fill="#4c88b0" /><path d="M2 9V4h6M24 4h6v5M30 23v5h-6M8 28H2v-5" stroke="#40a0e0" strokeWidth="2" /></Ico>,
  },
];

const dots = "bg-[radial-gradient(circle_at_1px_1px,#5c6470_0.6px,transparent_1px)] bg-[length:3px_4px]";

function Taskbar() {
  return (
    <nav aria-label="Taskbar" className="flex h-[40px] shrink-0 items-stretch border-t border-[#5c6878] bg-[linear-gradient(to_bottom,#ffffff28_0,#ffffff08_4px,transparent_10px),radial-gradient(ellipse_30px_30px_at_1.5%_100%,#7888c0,transparent),radial-gradient(ellipse_40px_24px_at_27%_90%,#4858a0,transparent),linear-gradient(to_right,#20283c_0,#10161f_6%,#161c30_9%,#0e1420_14%,#0c1218_28%,#0c1218_30%,#3c4c94_32%,#5468b8_35%,#4c60b0_38%,#141c28_41%,#0c1420_45%,#283468_49%,#4c60a8_54%,#5a6cb4_58%,#38488c_62%,#4c5ca4_65%,#38468c_68%,#34407c_70%,#0a1014_77%,#0a1014_84%,#10163a_86%,#0c1220_89%,#181c40_92%,#383a78_97%,#303470_100%)]">
      <button aria-label="Start" className="ml-[7px] flex w-[40px] items-center justify-center">
        <Ico w={38} h={38}><circle cx="16" cy="16" r="15.500" fill="#1c4468" stroke="#88b4cc" /><circle cx="16" cy="16" r="13.500" fill="#2c74a8" /><ellipse cx="16" cy="24" rx="10" ry="6" fill="#3cb4e0" /><path d="M2 14a14 14 0 0 1 28 0c-8 3-20 3-28 0z" fill="#8cb0c8" opacity=".6" /><path d="M9 9c2-1.500 4-1.500 6.500 0L14 15.500c-2-1.500-4-1.500-6.500 0z" fill="#f06030" /><path d="M17 9.500c2 1.500 4.500 1.500 7 0L22.500 16c-2.500 1.500-4.500 1.500-7 0z" fill="#90c848" /><path d="M7 17c2-1.500 4.500-1.500 6.500 0L12 23.500c-2-1.500-4-1.500-6.500 0z" fill="#50a8e8" /><path d="M15 17.500c2 1.500 4.500 1.500 7 0L20.500 24c-2.500 1.500-4.500 1.500-7 0z" fill="#fcc838" /></Ico>
      </button>
      <i className={`my-[4px] ml-[11px] w-[8px] ${dots}`} />
      <ul className="ml-[9px] flex gap-[2px]">
        {taskIcons.map((t) => (
          <li key={t.name} className="flex w-[60px] shrink-0">
            <button
              aria-label={t.name}
              className={
                "flex flex-1 items-center justify-center " +
                (t.active
                  ? "rounded-[3px] border border-[#f0f4ff] bg-linear-to-br from-[#ffffffd0] to-[#c0ccf0b0]"
                  : t.open
                    ? "rounded-[3px] border border-[#ffffff80] bg-linear-to-br from-[#ffffff70] via-[#ffffff28] to-[#ffffff18]"
                    : "border border-transparent")
              }
            >
              {t.icon}
            </button>
            {t.stack && <i className="w-[4px] rounded-r-[3px] border border-l-0 border-[#ffffff80] bg-[#ffffff30]" />}
          </li>
        ))}
      </ul>
      <i className={`my-[4px] ml-auto w-[8px] ${dots}`} />
      <div className="flex items-center gap-[8px] pl-[8px] text-[11px] text-white">
        <span className="mb-[4px] w-[24px]">EN</span>
        <button aria-label="Show hidden icons" className="mr-[4px]"><Tri dir="up" c="#fff" /></button>
        <Ico w={16} h={16}><path d="M3 3v28" stroke="#fff" strokeWidth="2.500" /><path d="M5 4c7-2 10 4 20 1v13c-8 3-13-2-20 0z" fill="#fff" /><circle cx="22" cy="22" r="9" fill="#d82020" /><path d="M18 18l8 8M26 18l-8 8" stroke="#fff" strokeWidth="3" /></Ico>
        <Ico w={16} h={16}><path d="M9 3l7 5-7 5-8-5zM23 3l8 5-8 5-7-5zM9 13l7 5-7 5-8-5zM23 13l8 5-8 5-7-5zM16 20l7 5-7 5-7-5z" fill="#fff" /></Ico>
        <Ico w={16} h={16}><circle cx="16" cy="16" r="16" fill="#f8981c" /><path d="M22 16a6 6 0 1 0-12 0 6 6 0 0 0 12 0zM23 10v13" stroke="#fff" strokeWidth="3.500" /></Ico>
        <Ico w={16} h={16}><path d="M3 28v-5M9 28v-8M15 28V16M21 28V11M27 28V5" stroke="#707070" strokeWidth="4" /><path d="M14 15l15 15M29 15L14 30" stroke="#e01818" strokeWidth="3.500" /></Ico>
        <Ico w={16} h={16}><path d="M4 6h13v24H4zM8 2h6v4H8z" stroke="#fff" strokeWidth="2.500" /><path d="M14 12h14v8l-4 4h-6l-4-4zM18 6v6M25 6v6M21 24v6h-4" fill="#fff" stroke="#fff" strokeWidth="2.500" /></Ico>
        <Ico w={16} h={16}><path d="M2 11h6l8-8v26l-8-8H2z" fill="#fff" /><path d="M20 11c2 3 2 7 0 10M24 7c4 5 4 13 0 18" stroke="#fff" strokeWidth="2" /></Ico>
      </div>
      <time className="flex w-[84px] flex-col items-center justify-center pl-[4px] text-[11px] leading-[17px] text-white"><span>12:00</span><span>30.07.2017</span></time>
      <button aria-label="Show desktop" className="w-[13px] border border-[#8088b8] bg-linear-to-b from-[#8088b8] to-[#303880]" />
    </nav>
  );
}

export default function App() {
  return (
    <div className={`flex h-screen flex-col overflow-hidden bg-[#f0f0f0] text-black ${uiFont}`}>
      <TitleBar />
      <MenuBar />
      <StandardBar />
      <FormatBar />
      <main className="relative min-h-0 flex-1 overflow-hidden border-t border-r-2 border-l-2 border-t-[#696969] border-r-white border-l-[#808080] bg-[#ababab]">
        <DataWindow />
        <WorkbookWindow />
        <MinimizedWindow />
      </main>
      <StatusBar />
      <Taskbar />
    </div>
  );
}
